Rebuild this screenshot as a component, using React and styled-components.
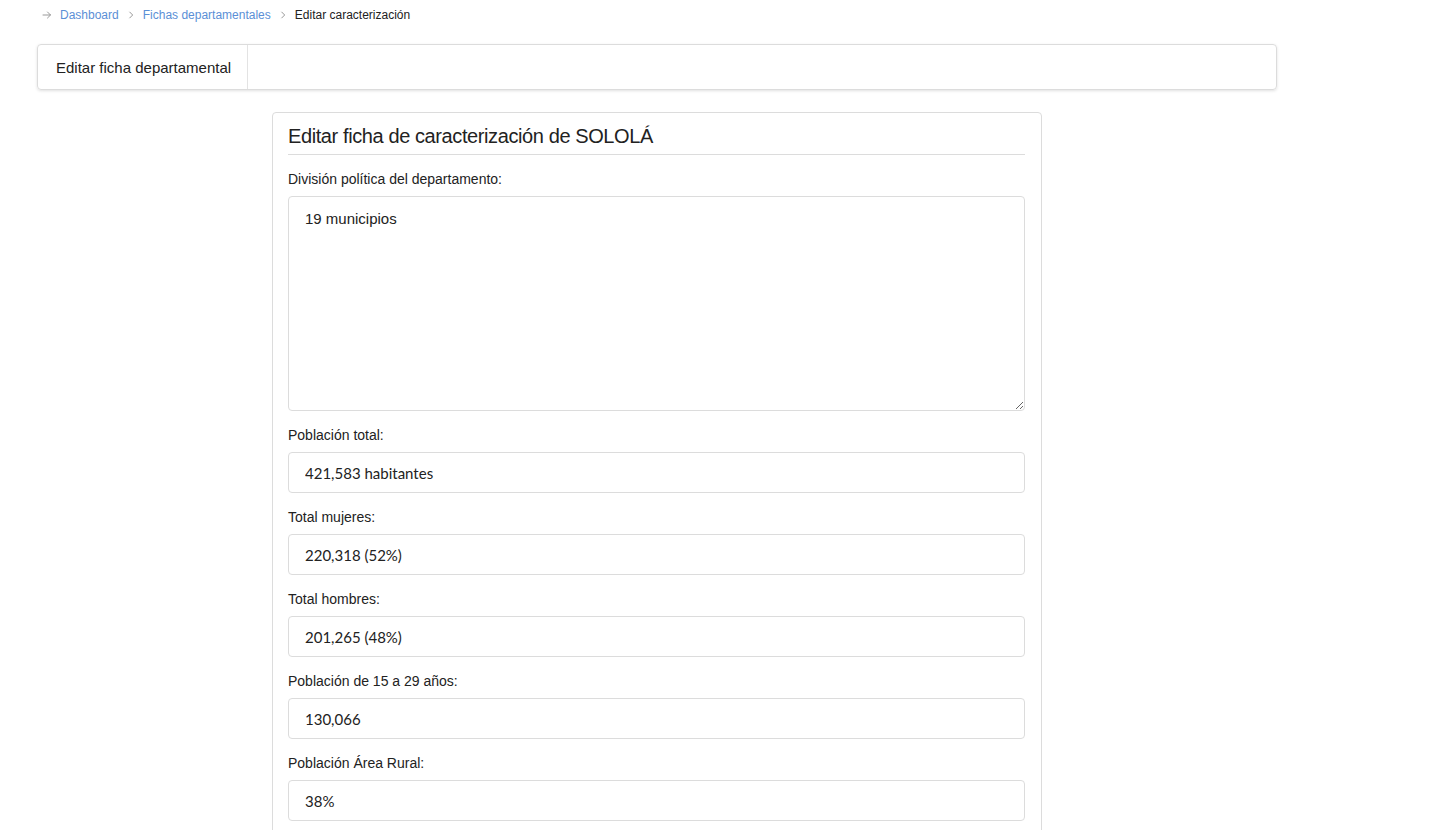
import React from "react";
import styled, { createGlobalStyle } from "styled-components";

const Global = createGlobalStyle`
  html, body { margin: 0; padding: 0; background: #fff; overflow: hidden; }
  body { font-family: "Liberation Sans", Arial, sans-serif; color: #212529; }
  * { box-sizing: border-box; }
`;

const Page = styled.div`
  width: 1240px;
  margin-left: 37px;
`;

const Breadcrumb = styled.nav`
  display: flex;
  align-items: center;
  height: 30px;
  padding-left: 4px;
  font-size: 12px;
  gap: 7px;
`;

const Crumb = styled.a`
  color: ${(p) => (p.$active ? "#222" : "#5b8fd6")};
  text-decoration: none;
`;

const Sep = styled.span`
  color: #aaa;
  display: inline-flex;
  align-items: center;
`;

const TabCard = styled.div`
  margin-top: 14px;
  height: 46px;
  border: 1px solid #dcdcdc;
  border-radius: 4px;
  box-shadow: 0 1px 3px rgba(0, 0, 0, 0.12);
  display: flex;
`;

const Tab = styled.div`
  display: flex;
  align-items: center;
  padding: 0 16px 0 18px;
  border-right: 1px solid #e3e3e3;
  font-size: 15px;
  color: #222;
`;

const Card = styled.div`
  width: 770px;
  margin: 22px auto 0;
  border: 1px solid #dcdcdc;
  border-radius: 4px;
  padding: 10px 16px 24px 15px;
`;

const Title = styled.h2`
  margin: 0;
  font-weight: 400;
  font-size: 20px;
  letter-spacing: -0.4px;
  line-height: 26px;
  padding-bottom: 5px;
  border-bottom: 1px solid #dcdcdc;
  color: #222;
`;

const Group = styled.div`
  margin-top: 15px;
`;

const Label = styled.label`
  display: block;
  font-size: 14px;
  color: #222;
  line-height: 18px;
  margin-bottom: 8px;
`;

const TextArea = styled.textarea`
  display: block;
  width: 100%;
  height: 215px;
  border: 1px solid #dcdcdc;
  border-radius: 4px;
  padding: 13px 16px;
  font-family: "Liberation Sans", Arial, sans-serif;
  font-size: 15px;
  color: #222;
  resize: vertical;
  outline: none;
`;

const Input = styled.input`
  display: block;
  width: 100%;
  height: 41px;
  border: 1px solid #dcdcdc;
  border-radius: 4px;
  padding: 0 16px;
  font-family: Lato, "Liberation Sans", sans-serif;
  font-size: 15px;
  color: #222;
  outline: none;
`;

const Chevron = ({ arrow }) =>
  arrow ? (
    <svg width="12" height="12" viewBox="0 0 24 24" fill="none" stroke="#999" strokeWidth="2" strokeLinecap="round" strokeLinejoin="round">
      <path d="M4 12h15M13 6l6 6-6 6" />
    </svg>
  ) : (
    <svg width="10" height="10" viewBox="0 0 24 24" fill="none" stroke="#999" strokeWidth="2.4" strokeLinecap="round" strokeLinejoin="round">
      <path d="M9 5l7 7-7 7" />
    </svg>
  );

const fields = [
  ["Población total:", "421,583 habitantes"],
  ["Total mujeres:", "220,318 (52%)"],
  ["Total hombres:", "201,265 (48%)"],
  ["Población de 15 a 29 años:", "130,066"],
  ["Población Área Rural:", "38%"],
];

export default function App() {
  return (
    <Page>
      <Global />
      <Breadcrumb>
        <Sep><Chevron arrow /></Sep>
        <Crumb href="#">Dashboard</Crumb>
        <Sep><Chevron /></Sep>
        <Crumb href="#">Fichas departamentales</Crumb>
        <Sep><Chevron /></Sep>
        <Crumb $active>Editar caracterización</Crumb>
      </Breadcrumb>
      <TabCard>
        <Tab>Editar ficha departamental</Tab>
      </TabCard>
      <Card>
        <Title>Editar ficha de caracterización de SOLOLÁ</Title>
        <Group>
          <Label>División política del departamento:</Label>
          <TextArea defaultValue="19 municipios" />
        </Group>
        {fields.map(([l, v]) => (
          <Group key={l}>
            <Label>{l}</Label>
            <Input defaultValue={v} />
          </Group>
        ))}
      </Card>
    </Page>
  );
}
